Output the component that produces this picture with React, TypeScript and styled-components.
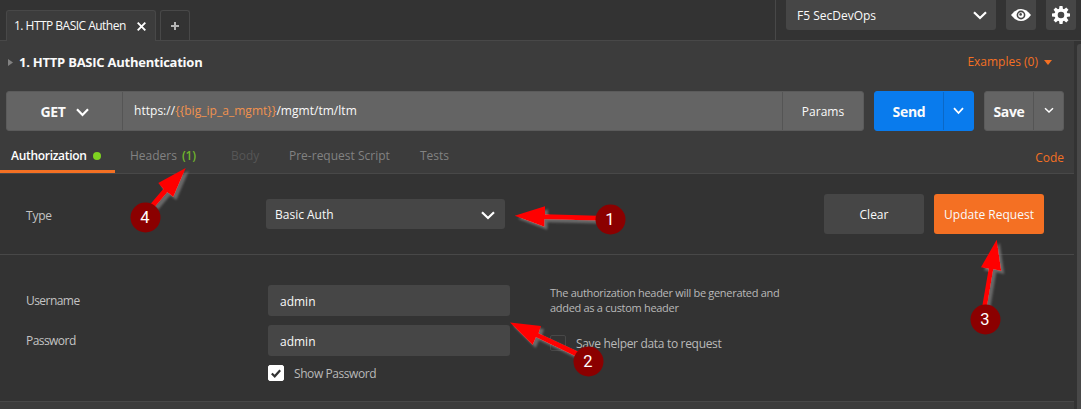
import React from "react";
import styled, { createGlobalStyle } from "styled-components";

const Global = createGlobalStyle`
  * { box-sizing: border-box; }
  body { margin: 0; background: #333333; overflow: hidden; }
  button, input { font: inherit; color: inherit; border: 0; padding: 0; margin: 0; outline: none; }
`;

const Window = styled.div`
  position: relative;
  width: 1081px;
  height: 409px;
  display: flex;
  flex-direction: column;
  overflow: hidden;
  background: #333333;
  color: #fafafa;
  font: 12px/16px "Open Sans", sans-serif;
`;

const TopBar = styled.header`
  display: flex;
  flex: none;
  height: 41px;
  border-bottom: 1px solid #484848;
`;

const RequestTabs = styled.div`
  display: flex;
  flex: 1;
  gap: 4px;
  padding: 10px 0 0 6px;
`;

const RequestTab = styled.div<{ $active?: boolean }>`
  display: flex;
  align-items: center;
  width: ${(p) => (p.$active ? 150 : 30)}px;
  height: ${(p) => (p.$active ? 31 : 30)}px;
  padding-left: ${(p) => (p.$active ? 7 : 9)}px;
  border: 1px solid #484848;
  border-bottom: 0;
  border-radius: 3px 3px 0 0;
  background: ${(p) => (p.$active ? "#3c3c3c" : "#333333")};
`;

const TabLabel = styled.span`
  width: 112px;
  margin-right: 11px;
  white-space: nowrap;
  letter-spacing: -0.52px;
`;

const Environment = styled.div`
  display: flex;
  gap: 10px;
  width: 306px;
  padding-left: 10px;
  border-left: 1px solid #484848;
`;

const EnvironmentSelect = styled.button`
  display: flex;
  align-items: center;
  justify-content: space-between;
  width: 210px;
  height: 30px;
  padding: 1px 9px 0 11px;
  border-radius: 0 0 3px 3px;
  background: #464646;
  letter-spacing: 0;
`;

const IconButton = styled.button`
  display: flex;
  align-items: center;
  justify-content: center;
  width: 30px;
  height: 30px;
  border-radius: 0 0 3px 3px;
  background: #464646;
`;

const Main = styled.div`
  display: flex;
  flex: 1;
`;

const Content = styled.main`
  display: flex;
  flex-direction: column;
  width: 1074px;
  background: #3c3c3c;
`;

const Gutter = styled.div`
  width: 7px;
  padding: 3px 0 0 3px;
  background: #333333;
`;

const Scrollbar = styled.div`
  height: 365px;
  border-radius: 3px 0 0 0;
  background: #484848;
`;

const TitleRow = styled.div`
  display: flex;
  align-items: center;
  height: 50px;
  padding: 0 22px 8px 8px;
`;

const Title = styled.h1`
  flex: 1;
  margin: 0 0 1px 6px;
  font-size: 13px;
  font-weight: 700;
  line-height: 16px;
  letter-spacing: -0.24px;
`;

const Examples = styled.span`
  display: flex;
  align-items: center;
  gap: 6px;
  color: #f47023;
`;

const UrlRow = styled.div`
  display: flex;
  gap: 10px;
  height: 40px;
  padding-left: 6px;
`;

const Segments = styled.div<{ $tone?: "blue" }>`
  display: flex;
  overflow: hidden;
  border: 1px solid ${(p) => (p.$tone ? "#097bed" : "#5b5b5b")};
  border-radius: 3px;
  background: ${(p) => (p.$tone ? "#097bed" : "#646464")};
`;

const Segment = styled.button<{ $w: number; $strong?: boolean; $divided?: "grey" | "blue" }>`
  display: flex;
  align-items: center;
  justify-content: center;
  gap: 10px;
  width: ${(p) => p.$w}px;
  padding-top: 2px;
  background: transparent;
  font-size: ${(p) => (p.$strong ? 14 : 12)}px;
  font-weight: ${(p) => (p.$strong ? 700 : 400)};
  letter-spacing: ${(p) => (p.$strong ? -0.3 : 0.05)}px;
  border-left: ${(p) => (p.$divided ? `1px solid ${p.$divided === "blue" ? "#0b68c6" : "#555555"}` : "0")};
`;

const ArrowSegment = styled(Segment)`
  padding: 0 0 1px;
`;

const Url = styled.div`
  width: 660px;
  padding: 11px 0 0 11px;
  border-left: 1px solid #555555;
  letter-spacing: 0.03px;
`;

const Variable = styled.span`
  color: #f1924f;
`;

const SectionTabs = styled.nav`
  display: flex;
  height: 43px;
  padding: 0 10px 0 0;
  border-bottom: 1px solid #484848;
`;

const SectionTab = styled.div<{ $state?: "active" | "disabled"; $w: number }>`
  display: flex;
  align-items: center;
  width: ${(p) => p.$w}px;
  height: 42px;
  padding-top: ${(p) => (p.$state === "active" ? 11 : 8)}px;
  padding-left: ${(p) => (p.$state === "active" ? 11 : 0)}px;
  margin-right: ${(p) => (p.$state === "active" ? 15 : 0)}px;
  border-bottom: ${(p) => (p.$state === "active" ? "3px solid #f47023" : "0")};
  color: ${(p) => (p.$state === "active" ? "#ffffff" : p.$state === "disabled" ? "#565656" : "#828282")};
  font-weight: ${(p) => (p.$state === "active" ? 600 : 400)};
  letter-spacing: ${(p) => (p.$state === "active" ? -0.3 : 0)}px;
  white-space: pre;
`;

const Dot = styled.i`
  width: 8px;
  height: 8px;
  margin-left: 6px;
  border-radius: 50%;
  background: #7ed321;
`;

const Count = styled.span`
  margin-left: 5px;
  color: #70b52b;
  font-weight: 600;
  letter-spacing: -0.25px;
`;

const CodeLink = styled.a`
  margin: 19px 0 0 auto;
  color: #f47023;
`;

const Panel = styled.section`
  background: #333333;
  border-bottom: 1px solid #484848;
`;

const TypePanel = styled(Panel)`
  display: flex;
  align-items: center;
  height: 81px;
  padding: 0 30px 0 26px;
`;

const Label = styled.label`
  width: 242px;
  padding-top: 1px;
  color: #c4c4c4;
  letter-spacing: -0.55px;
`;

const TypeLabel = styled(Label)`
  width: 240px;
  padding-top: 3px;
  letter-spacing: -0.2px;
`;

const TypeSelect = styled.button`
  display: flex;
  align-items: center;
  justify-content: space-between;
  width: 239px;
  height: 30px;
  margin-right: 319px;
  padding: 2px 10px 0 9px;
  border-radius: 3px;
  background: #464646;
`;

const ActionButton = styled.button<{ $primary?: boolean }>`
  width: ${(p) => (p.$primary ? 110 : 100)}px;
  height: 40px;
  margin-right: ${(p) => (p.$primary ? 0 : 10)}px;
  padding-top: 2px;
  border-radius: 3px;
  background: ${(p) => (p.$primary ? "#f47023" : "#464646")};
`;

const AuthPanel = styled(Panel)`
  display: flex;
  height: 147px;
  padding: 30px 0 0 26px;
`;

const Fields = styled.div`
  display: flex;
  flex-direction: column;
  gap: 9px;
  width: 484px;
`;

const Field = styled.div`
  display: flex;
  align-items: center;
  height: 31px;
`;

const TextInput = styled.input`
  width: 242px;
  height: 31px;
  padding: 1px 12px 0;
  border-radius: 3px;
  background: #464646;
`;

const CheckRow = styled.label<{ $indent?: number; $tracking: number }>`
  display: flex;
  align-items: center;
  gap: 10px;
  height: 16px;
  margin-left: ${(p) => p.$indent ?? 0}px;
  color: #b9b9b9;
  letter-spacing: ${(p) => p.$tracking}px;
`;

const CheckText = styled.span`
  padding-top: 2px;
`;

const CheckBox = styled.span<{ $checked?: boolean }>`
  display: flex;
  align-items: center;
  justify-content: center;
  width: 16px;
  height: 16px;
  border: 1px solid ${(p) => (p.$checked ? "#ffffff" : "#484848")};
  border-radius: 2px;
  background: ${(p) => (p.$checked ? "#ffffff" : "transparent")};
`;

const Help = styled.div`
  margin-left: 40px;
  width: 250px;
`;

const HelpText = styled.p`
  margin: 0 0 20px;
  font-size: 11px;
  line-height: 15px;
  letter-spacing: -0.3px;
  color: #b9b9b9;
`;

const Overlay = styled.svg`
  position: absolute;
  inset: 0;
  pointer-events: none;
`;

const Chevron = ({ w = 14, h = 9, s = 2.2 }: { w?: number; h?: number; s?: number }) => (
  <svg width={w} height={h} viewBox={`0 0 ${w} ${h}`} fill="none" stroke="#fff" strokeWidth={s}>
    <path d={`M1 1.2L${w / 2} ${h - 2}L${w - 1} 1.2`} />
  </svg>
);

const teeth = [0, 45, 90, 135, 180, 225, 270, 315];

const callouts = [
  { n: 1, x: 610.5, y: 219.5, d: "M514.7 215.7L545 206.3V214.3L597 215.7V220.4L544.6 219.3L544.3 226.7Z" },
  { n: 2, x: 588.5, y: 361.5, d: "M510 322.6L541 326L538.7 333.3L578 351.5L575 356L536 337.3L532.7 345Z" },
  { n: 3, x: 985.5, y: 319.5, d: "M996.7 239.7L1001.3 271L993.3 269.3L987 306H982.3L988.7 268.7L981 267.3Z" },
  { n: 4, x: 145.5, y: 217.5, d: "M185.7 168L173.3 197L167.3 192.3L155.3 206.5L150.5 204L163.3 189L158.3 183Z" },
];

export default function App() {
  return (
    <Window>
      <Global />
      <TopBar>
        <RequestTabs>
          <RequestTab $active>
            <TabLabel>1. HTTP BASIC Authen</TabLabel>
            <svg width="9" height="9" viewBox="0 0 9 9" stroke="#fff" strokeWidth="1.9">
              <path d="M.7 .7L8.3 8.3M8.3 .7L.7 8.3" />
            </svg>
          </RequestTab>
          <RequestTab>
            <svg width="10" height="10" viewBox="0 0 10 10" stroke="#b5b5b5" strokeWidth="2">
              <path d="M5 1V9M1 5H9" />
            </svg>
          </RequestTab>
        </RequestTabs>
        <Environment>
          <EnvironmentSelect>
            F5 SecDevOps
            <Chevron />
          </EnvironmentSelect>
          <IconButton aria-label="Quick look">
            <svg width="20" height="12" viewBox="0 0 20 12">
              <path d="M0 6Q4.500 0 10 0T20 6Q15.500 12 10 12T0 6Z" fill="#fff" />
              <circle cx="10" cy="6" r="4.400" fill="#464646" />
              <circle cx="10" cy="6" r="2.800" fill="#fff" />
              <circle cx="9.600" cy="5.400" r="1.300" fill="#464646" />
            </svg>
          </IconButton>
          <IconButton aria-label="Settings">
            <svg width="18" height="18" viewBox="-9 -9 18 18">
              {teeth.map((a) => (
                <path key={a} d="M-2.100 -5L-1.500 -9H1.500L2.100 -5Z" fill="#fff" transform={`rotate(${a})`} />
              ))}
              <circle r="4.900" fill="none" stroke="#fff" strokeWidth="3.200" />
            </svg>
          </IconButton>
        </Environment>
      </TopBar>
      <Main>
        <Content>
          <TitleRow>
            <svg width="5" height="7" viewBox="0 0 5 7"><path d="M0 0L5 3.500L0 7Z" fill="#828282" /></svg>
            <Title>1. HTTP BASIC Authentication</Title>
            <Examples>
              Examples (0)
              <svg width="8" height="5" viewBox="0 0 8 5"><path d="M0 0H8L4 5Z" fill="#f47023" /></svg>
            </Examples>
          </TitleRow>
          <UrlRow>
            <Segments>
              <Segment $w={115} $strong>
                GET
                <Chevron w={13} />
              </Segment>
              <Url>https://<Variable>{"{{big_ip_a_mgmt}}"}</Variable>/mgmt/tm/ltm</Url>
              <Segment $w={81} $divided="grey">Params</Segment>
            </Segments>
            <Segments $tone="blue">
              <Segment $w={68} $strong>Send</Segment>
              <ArrowSegment $w={30} $divided="blue"><Chevron w={11} h={8} s={1.8} /></ArrowSegment>
            </Segments>
            <Segments>
              <Segment $w={48} $strong>Save</Segment>
              <ArrowSegment $w={30} $divided="grey"><Chevron w={10} h={7} s={1.5} /></ArrowSegment>
            </Segments>
          </UrlRow>
          <SectionTabs>
            <SectionTab $state="active" $w={115}>Authorization<Dot /></SectionTab>
            <SectionTab $w={101}>Headers<Count>(1)</Count></SectionTab>
            <SectionTab $w={58} $state="disabled">Body</SectionTab>
            <SectionTab $w={131}>Pre-request Script</SectionTab>
            <SectionTab $w={60}>Tests</SectionTab>
            <CodeLink>Code</CodeLink>
          </SectionTabs>
          <TypePanel>
            <TypeLabel>Type</TypeLabel>
            <TypeSelect>
              Basic Auth
              <Chevron />
            </TypeSelect>
            <ActionButton>Clear</ActionButton>
            <ActionButton $primary>Update Request</ActionButton>
          </TypePanel>
          <AuthPanel>
            <Fields>
              <Field>
                <Label>Username</Label>
                <TextInput defaultValue="admin" />
              </Field>
              <Field>
                <Label>Password</Label>
                <TextInput defaultValue="admin" />
              </Field>
              <CheckRow $indent={242} $tracking={-0.42}>
                <CheckBox $checked>
                  <svg width="10" height="9" viewBox="0 0 10 9" fill="none" stroke="#333" strokeWidth="2.200">
                    <path d="M.8 4.500L3.700 7.300L9.200 1.200" />
                  </svg>
                </CheckBox>
                <CheckText>Show Password</CheckText>
              </CheckRow>
            </Fields>
            <Help>
              <HelpText>The authorization header will be generated and added as a custom header</HelpText>
              <CheckRow $tracking={-0.32}>
                <CheckBox />
                <CheckText>Save helper data to request</CheckText>
              </CheckRow>
            </Help>
          </AuthPanel>
        </Content>
        <Gutter>
          <Scrollbar />
        </Gutter>
      </Main>
      <Overlay width="1081" height="409" viewBox="0 0 1081 409">
        <defs>
          <filter id="arrow-shadow" x="-20%" y="-30%" width="150%" height="180%">
            <feDropShadow dx="3" dy="3" stdDeviation="1.300" floodColor="#858585" floodOpacity="0.65" />
          </filter>
        </defs>
        {callouts.map((c) => (
          <g key={c.n}>
            <path d={c.d} fill="#ff0000" filter="url(#arrow-shadow)" />
            <circle cx={c.x} cy={c.y} r="15" fill="#8b0000" />
            <text x={c.x - 0.5} y={c.y + 5.500} textAnchor="middle" fill="#fff" fontFamily="Roboto, sans-serif" fontSize="16.500">
              {c.n}
            </text>
          </g>
        ))}
      </Overlay>
    </Window>
  );
}
